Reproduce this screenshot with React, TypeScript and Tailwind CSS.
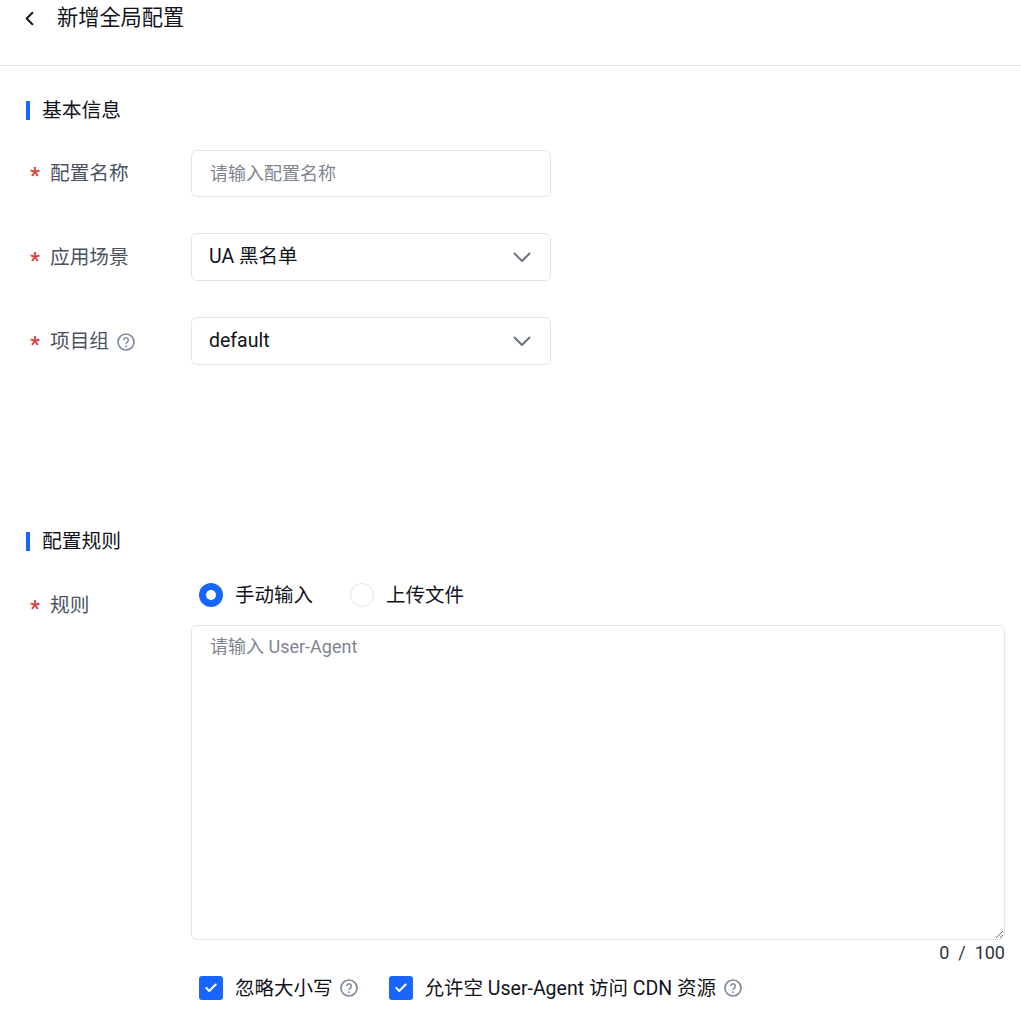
import { Check, ChevronLeft } from "lucide-react";
import type { ReactNode } from "react";

const font = "font-['Roboto','Noto_Sans_CJK_SC',sans-serif]";

function Help() {
  return (
    <svg width="18" height="18" viewBox="0 0 18 18" fill="none" className="block shrink-0">
      <circle cx="9" cy="9" r="8" stroke="#7f8aa0" strokeWidth="1.7" />
      <path d="M6.6 7.2a2.4 2.4 0 1 1 3.7 2c-.8.5-1.3 1-1.3 1.9" stroke="#7f8aa0" strokeWidth="1.5" fill="none" />
      <circle cx="9" cy="13.2" r="1" fill="#7f8aa0" />
    </svg>
  );
}

function SelectArrow() {
  return (
    <svg width="18" height="10" viewBox="0 0 18 10" fill="none" className="block">
      <path d="M1 1l8 8 8-8" stroke="#6b7280" strokeWidth="2" />
    </svg>
  );
}

function SectionTitle({ children }: { children: ReactNode }) {
  return (
    <div className="flex items-center h-[19px] pl-[26px] gap-3">
      <span className="w-1 h-[19px] bg-[#1966ff]" />
      <h2 className="text-[19.8px] leading-[21px] font-normal text-[#10131a]">{children}</h2>
    </div>
  );
}

function Label({ children, help, nudge }: { children: ReactNode; help?: boolean; nudge?: boolean }) {
  return (
    <div className={`w-[191px] shrink-0 flex items-center pl-[30px] text-[19.7px] text-[#4b5363] ${nudge ? "pt-[2px]" : ""}`}>
      <span className="w-5 text-[#e03c3c] text-[22px] font-semibold leading-none pt-1.5">*</span>
      <span>{children}</span>
      {help && <span className="ml-2"><Help /></span>}
    </div>
  );
}

function Select({ value }: { value: string }) {
  return (
    <div className="w-[360px] h-12 rounded-md border border-[#e1e5ed] bg-white flex items-center justify-between pl-[17px] pr-[19px] text-[19.5px] text-[#10131a]">
      <span>{value}</span>
      <SelectArrow />
    </div>
  );
}

export default function App() {
  return (
    <div className={`${font} w-[1021px] h-[1011px] overflow-hidden bg-white`}>
      <header className="h-[66px] border-b border-[#e5e7eb] flex items-start">
        <div className="flex items-center h-9 pl-[18px]">
          <ChevronLeft size={23} strokeWidth={2} className="text-[#10131a]" />
          <h1 className="ml-4 text-[21.2px] font-normal text-[#10131a]">新增全局配置</h1>
        </div>
      </header>

      <div className="pt-[35px]">
        <SectionTitle>基本信息</SectionTitle>
        <div className="mt-[30px] flex items-center">
          <Label>配置名称</Label>
          <input
            readOnly
            placeholder="请输入配置名称"
            className="w-[360px] h-[47px] rounded-md border border-[#e1e5ed] bg-white px-[18px] text-[18px] placeholder:text-[#7f8590] outline-none"
          />
        </div>
        <div className="mt-9 flex items-center">
          <Label nudge>应用场景</Label>
          <Select value="UA 黑名单" />
        </div>
        <div className="mt-9 flex items-center">
          <Label help nudge>项目组</Label>
          <Select value="default" />
        </div>
      </div>

      <div className="mt-[167px]">
        <SectionTitle>配置规则</SectionTitle>
        <div className="mt-8 flex">
          <div className="flex items-start pt-2"><Label>规则</Label></div>
          <div className="flex-1 pr-4">
            <div className="flex items-center h-6 pl-2 text-[19.5px] text-[#10131a]">
              <span className="w-6 h-6 rounded-full bg-[#1966ff] flex items-center justify-center">
                <span className="w-2.5 h-2.5 rounded-full bg-white" />
              </span>
              <span className="ml-3 pt-[2px]">手动输入</span>
              <span className="ml-[37px] w-6 h-6 rounded-full border border-[#e1e5ed] bg-white" />
              <span className="ml-3 pt-[2px]">上传文件</span>
            </div>
            <textarea
              readOnly
              placeholder="请输入 User-Agent"
              className="block mt-[18px] w-[814px] h-[315px] rounded-md border border-[#e1e5ed] bg-white px-[18px] py-2 text-[18px] leading-[26px] placeholder:text-[#7f8590] outline-none resize-y"
            />
            <div className="text-right text-[18px] leading-[26px] text-[#2c3340] whitespace-pre">0  /  100</div>
            <div className="mt-[6px] flex items-center pl-2 text-[19.5px] text-[#10131a]">
              <span className="w-6 h-6 rounded-[3px] bg-[#1966ff] flex items-center justify-center">
                <Check size={14} strokeWidth={3.5} className="text-white" />
              </span>
              <span className="ml-3 pt-[2px]">忽略大小写</span>
              <span className="ml-[7px]"><Help /></span>
              <span className="ml-[31px] w-6 h-6 rounded-[3px] bg-[#1966ff] flex items-center justify-center">
                <Check size={14} strokeWidth={3.5} className="text-white" />
              </span>
              <span className="ml-3 pt-[2px]">允许空 User-Agent 访问 CDN 资源</span>
              <span className="ml-2"><Help /></span>
            </div>
          </div>
        </div>
      </div>
    </div>
  );
}
